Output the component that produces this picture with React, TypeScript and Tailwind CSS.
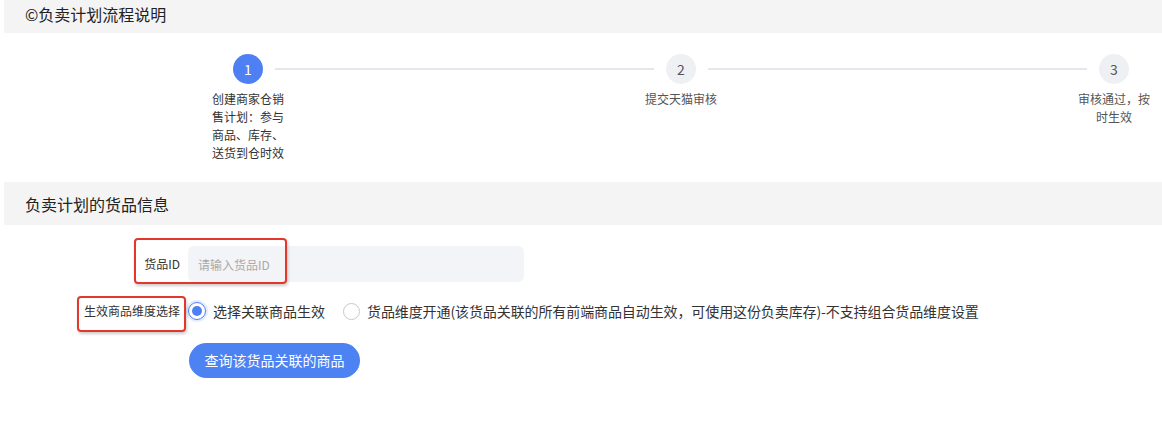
const font = { fontFamily: '"Noto Sans CJK SC", "Noto Sans", sans-serif' };

interface Step {
  index: number;
  label: string[];
  active: boolean;
}

const steps: Step[] = [
  { index: 1, label: ['创建商家仓销', '售计划：参与', '商品、库存、', '送货到仓时效'], active: true },
  { index: 2, label: ['提交天猫审核'], active: false },
  { index: 3, label: ['审核通过，按', '时生效'], active: false },
];

const StepItem = ({ step }: { step: Step }) => (
  <div className="relative z-10 flex w-[72px] shrink-0 flex-col items-center">
    <div
      className={
        step.active
          ? 'flex h-[30px] w-[30px] items-center justify-center rounded-full bg-[#4e80f3] text-[14px] text-white'
          : 'flex h-[30px] w-[30px] items-center justify-center rounded-full bg-[#eff0f4] text-[14px] text-[#555]'
      }
    >
      {step.index}
    </div>
    <div
      className={
        step.active
          ? 'mt-[6px] whitespace-nowrap text-left text-[12px] leading-[18px] text-[#333]'
          : 'mt-[6px] whitespace-nowrap text-center text-[12px] leading-[18px] text-[#555]'
      }
    >
      {step.label.map((line) => (
        <div key={line}>{line}</div>
      ))}
    </div>
  </div>
);

const Connector = () => (
  <div className="mx-[-9px] mt-[14px] h-[2px] flex-1 bg-[#e6e6ec]" />
);

export default function App() {
  return (
    <div className="relative min-h-[443px] w-full bg-white text-[#222]" style={font}>
      {/* section 1 */}
      <div className="ml-[4px] h-[33px] bg-[#f4f4f4] pl-[21px] pt-[5px] text-[16px] leading-[18px]">
        ©负卖计划流程说明
      </div>

      <div className="flex h-[149px] pl-[212px] pr-[12px] pt-[21px]">
        <StepItem step={steps[0]} />
        <Connector />
        <StepItem step={steps[1]} />
        <Connector />
        <StepItem step={steps[2]} />
      </div>

      {/* section 2 */}
      <div className="ml-[4px] flex h-[43px] items-center bg-[#f4f4f4] pl-[21px] text-[16px]">
        负卖计划的货品信息
      </div>

      <div className="flex flex-col pl-[80px] pt-[21px] text-[#333]">
        <div className="flex items-center gap-[8px]">
          <div className="w-[100px] text-right text-[12px]">货品ID</div>
          <input
            className="h-[36px] w-[336px] rounded-[6px] bg-[#f3f4f7] px-[10px] text-[12px] outline-none placeholder:text-[#aaa]"
            placeholder="请输入货品ID"
          />
        </div>

        <div className="mt-[19px] flex h-[20px] items-center gap-[8px]">
          <div className="w-[100px] text-right text-[12px]">生效商品维度选择</div>
          <div className="flex items-center text-[14px]">
            <span className="flex h-[18px] w-[18px] items-center justify-center rounded-full border-[1.5px] border-[#4e80f3] shadow-[0_0_0_2px_rgba(78,128,243,0.15)]">
              <span className="h-[10px] w-[10px] rounded-full bg-[#4e80f3]" />
            </span>
            <span className="ml-[7px]">选择关联商品生效</span>
            <span className="ml-[18px] h-[17px] w-[17px] rounded-full border border-[#c8c8cc] bg-white" />
            <span className="ml-[7px] tracking-[-0.1px]">
              货品维度开通(该货品关联的所有前端商品自动生效，可使用这份负卖库存)-不支持组合货品维度设置
            </span>
          </div>
        </div>

        <div className="mt-[22px] pl-[109px]">
          <button className="h-[35px] w-[171px] rounded-full bg-[#4c82f2] text-[14px] text-white">
            查询该货品关联的商品
          </button>
        </div>
      </div>

      {/* annotation boxes */}
      <div className="absolute left-[134px] top-[238px] h-[46px] w-[153px] rounded-[4px] border-2 border-[#e3372b] shadow-[1px_2px_3px_rgba(0,0,0,0.2)]" />
      <div className="absolute left-[77px] top-[296px] h-[36px] w-[109px] rounded-[4px] border-2 border-[#e3372b] shadow-[1px_2px_3px_rgba(0,0,0,0.2)]" />
    </div>
  );
}
